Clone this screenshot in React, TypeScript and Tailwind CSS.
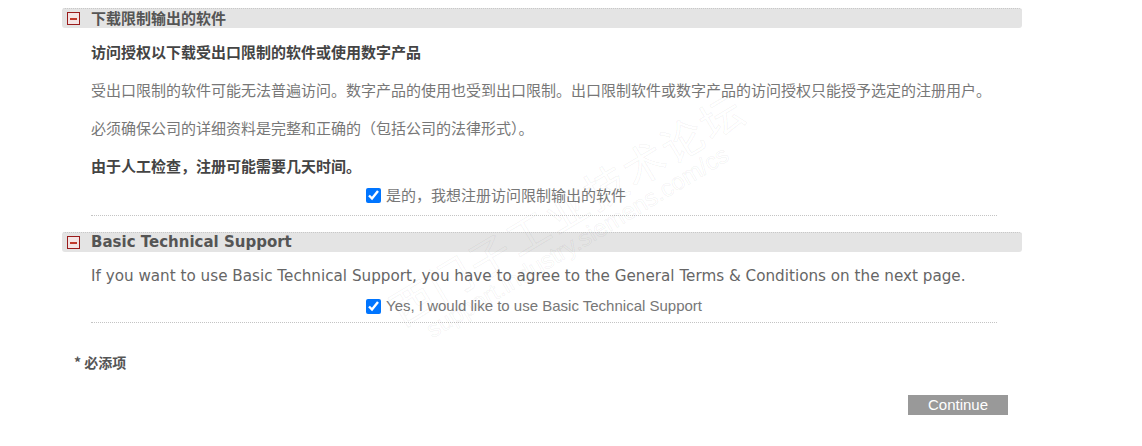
import React from "react";

const cjk = "font-['Microsoft_YaHei','Noto_Sans_CJK_SC',sans-serif]";

function SectionHeader({ title, latin }: { title: string; latin?: boolean }) {
  return (
    <div className="flex h-[20px] items-center rounded-[3px] border-t border-dotted border-[#c8c8c8] bg-[#e4e4e4]">
      <div className="ml-[5px] flex h-[13px] w-[13px] items-center justify-center border-[1.5px] border-[#9a1b1b] bg-[#f4e4e4]">
        <div className="h-[2px] w-[7px] bg-[#c0392b]" />
      </div>
      <span
        className={
          latin
            ? "ml-[11px] font-['DejaVu_Sans',Verdana,sans-serif] text-[15px] font-bold text-[#555]"
            : `ml-[11px] ${cjk} text-[15px] font-bold text-[#555]`
        }
      >
        {title}
      </span>
    </div>
  );
}

export default function App() {
  return (
    <div className="relative h-[446px] w-[1142px] overflow-hidden bg-white">
      <div className="ml-[62px] w-[960px] pt-[8px]">
        <SectionHeader title="下载限制输出的软件" />
        <div className={`pl-[29px] ${cjk} text-[15px]`}>
          <div className="mt-[12px] flex flex-col gap-[14px]">
            <p className="h-[24px] leading-[24px] font-bold text-[#444]">
              访问授权以下载受出口限制的软件或使用数字产品
            </p>
            <p className="h-[24px] leading-[24px] text-[#777]">
              受出口限制的软件可能无法普遍访问。数字产品的使用也受到出口限制。出口限制软件或数字产品的访问授权只能授予选定的注册用户。
            </p>
            <p className="h-[24px] leading-[24px] text-[#777]">
              必须确保公司的详细资料是完整和正确的（包括公司的法律形式）。
            </p>
            <p className="h-[24px] leading-[24px] font-bold text-[#444]">
              由于人工检查，注册可能需要几天时间。
            </p>
          </div>
          <div className="mt-[5px] flex h-[24px] items-center pl-[275px]">
            <input
              type="checkbox"
              defaultChecked
              className="m-0 h-[15px] w-[15px] accent-[#0075ff]"
            />
            <span className="ml-[5px] leading-[24px] text-[#777]">
              是的，我想注册访问限制输出的软件
            </span>
          </div>
          <div className="mt-[8px] w-[906px] border-t border-dotted border-[#c4c4c4]" />
        </div>

        <div className="mt-[16px]">
          <SectionHeader title="Basic Technical Support" latin />
        </div>
        <div className="pl-[29px]">
          <p className="mt-[12px] h-[24px] whitespace-nowrap font-['DejaVu_Sans',Verdana,sans-serif] text-[15.2px] leading-[24px] text-[#666]">
            If you want to use Basic Technical Support, you have to agree to the General Terms &amp; Conditions on the next page.
          </p>
          <div className="mt-[6px] flex h-[24px] items-center pl-[275px]">
            <input
              type="checkbox"
              defaultChecked
              className="m-0 h-[15px] w-[15px] accent-[#0075ff]"
            />
            <span className="ml-[5px] font-['Liberation_Sans',Arial,sans-serif] text-[15px] leading-[24px] text-[#777]">
              Yes, I would like to use Basic Technical Support
            </span>
          </div>
          <div className="mt-[4px] w-[906px] border-t border-dotted border-[#c4c4c4]" />
        </div>

        <div className={`ml-[12px] mt-[29px] h-[20px] ${cjk} text-[14px] leading-[20px] font-bold text-[#555]`}>
          * 必添项
        </div>

        <div className="mt-[23px] flex justify-end pr-[14px]">
          <button className="h-[20px] w-[100px] bg-[#999] font-['Liberation_Sans',Arial,sans-serif] text-[15px] leading-[20px] text-white">
            Continue
          </button>
        </div>
      </div>

      {/* watermark */}
      <div className="pointer-events-none absolute left-[400px] top-[288px] origin-left -rotate-[31deg] select-none">
        <div className={`${cjk} whitespace-nowrap text-[42px] leading-[44px] tracking-[3px] text-transparent [-webkit-text-stroke:1px_rgba(0,0,0,0.05)]`}>
          西门子工业技术论坛
        </div>
        <div className="whitespace-nowrap pl-[20px] font-['Liberation_Sans',Arial,sans-serif] text-[24px] leading-[26px] text-transparent [-webkit-text-stroke:1px_rgba(0,0,0,0.05)]">
          support.industry.siemens.com/cs
        </div>
      </div>
    </div>
  );
}
